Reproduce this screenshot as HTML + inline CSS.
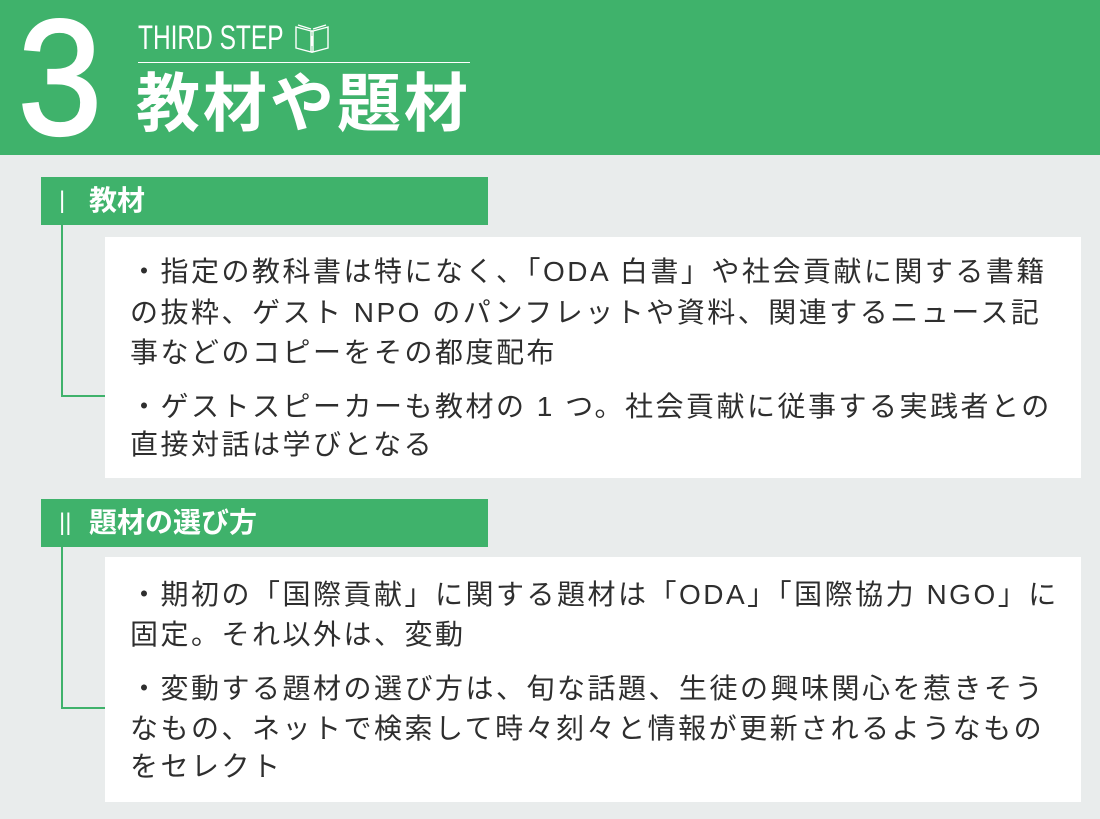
<!DOCTYPE html>
<html><head><meta charset="utf-8"><style>
*{margin:0;padding:0;box-sizing:border-box}
body{width:1100px;height:819px;background:#e9ecec;position:relative;overflow:hidden;font-family:"Liberation Sans","Noto Sans CJK JP",sans-serif;color:#333}
.hd{position:absolute;left:0;top:0;width:1100px;height:155px;background:#3fb26b}
.three{position:absolute;left:18px;top:-4px;font-size:164px;line-height:164px;color:#fff;font-family:"Liberation Sans",sans-serif;-webkit-text-stroke:3px #fff;transform:scaleX(.92);transform-origin:left}
.step{position:absolute;left:138px;top:18px;font-size:34px;line-height:40px;color:#fff;font-family:"Liberation Sans",sans-serif;transform:scaleX(.72);transform-origin:left}
.rule{position:absolute;left:138px;top:62px;width:332px;height:1px;background:#fff}
.title{position:absolute;left:136px;top:64px;font-size:64px;line-height:80px;color:#fff;font-weight:bold;letter-spacing:3px}
.bar{position:absolute;left:41px;width:447px;height:48px;background:#3fb26b;color:#fff;font-weight:bold;font-size:28px;line-height:48px}
.bar .n{position:absolute;left:18px;font-weight:normal;font-size:24px}
.bar .t{position:absolute;left:48px}
.vl{position:absolute;left:61px;width:2px;background:#3fb26b}
.hl{position:absolute;left:61px;width:44px;height:2px;background:#3fb26b}
.card{position:absolute;left:105px;width:976px;background:#fff}
.l{position:absolute;left:130px;font-size:28px;line-height:40px;letter-spacing:2.5px;white-space:nowrap;color:#2e2e2e}
</style></head><body>
<div class="hd"></div>
<div class="three">3</div>
<div class="step">THIRD STEP</div>
<svg style="position:absolute;left:294px;top:22px" width="36" height="32" viewBox="0 0 36 32" fill="none" stroke="#fff" stroke-width="1.4"><path d="M2 5 L17 9 L17 30 L2 26 Z"/><path d="M34 5 L19 9 L19 30 L34 26 Z"/><path d="M4 3 L17 7 M32 3 L19 7 M17 9 L19 9 M17 30 L19 30"/><path d="M18 14 V24" stroke-width="2"/></svg>
<div class="rule"></div>
<div class="title">教材や題材</div>

<div class="bar" style="top:177px"><span class="n">|</span><span class="t">教材</span></div>
<div class="vl" style="top:225px;height:172px"></div>
<div class="hl" style="top:395px"></div>
<div class="card" style="top:237px;height:241px"></div>
<div class="l" style="top:252px">・指定の教科書は特になく、「ODA 白書」や社会貢献に関する書籍</div>
<div class="l" style="top:293px">の抜粋、ゲスト NPO のパンフレットや資料、関連するニュース記</div>
<div class="l" style="top:333px">事などのコピーをその都度配布</div>
<div class="l" style="top:387px">・ゲストスピーカーも教材の 1 つ。社会貢献に従事する実践者との</div>
<div class="l" style="top:425px">直接対話は学びとなる</div>

<div class="bar" style="top:499px"><span class="n">||</span><span class="t">題材の選び方</span></div>
<div class="vl" style="top:547px;height:162px"></div>
<div class="hl" style="top:707px"></div>
<div class="card" style="top:557px;height:245px"></div>
<div class="l" style="top:575px">・期初の「国際貢献」に関する題材は「ODA」「国際協力 NGO」に</div>
<div class="l" style="top:615px">固定。それ以外は、変動</div>
<div class="l" style="top:669px">・変動する題材の選び方は、旬な話題、生徒の興味関心を惹きそう</div>
<div class="l" style="top:709px">なもの、ネットで検索して時々刻々と情報が更新されるようなもの</div>
<div class="l" style="top:747px">をセレクト</div>
</body></html>
